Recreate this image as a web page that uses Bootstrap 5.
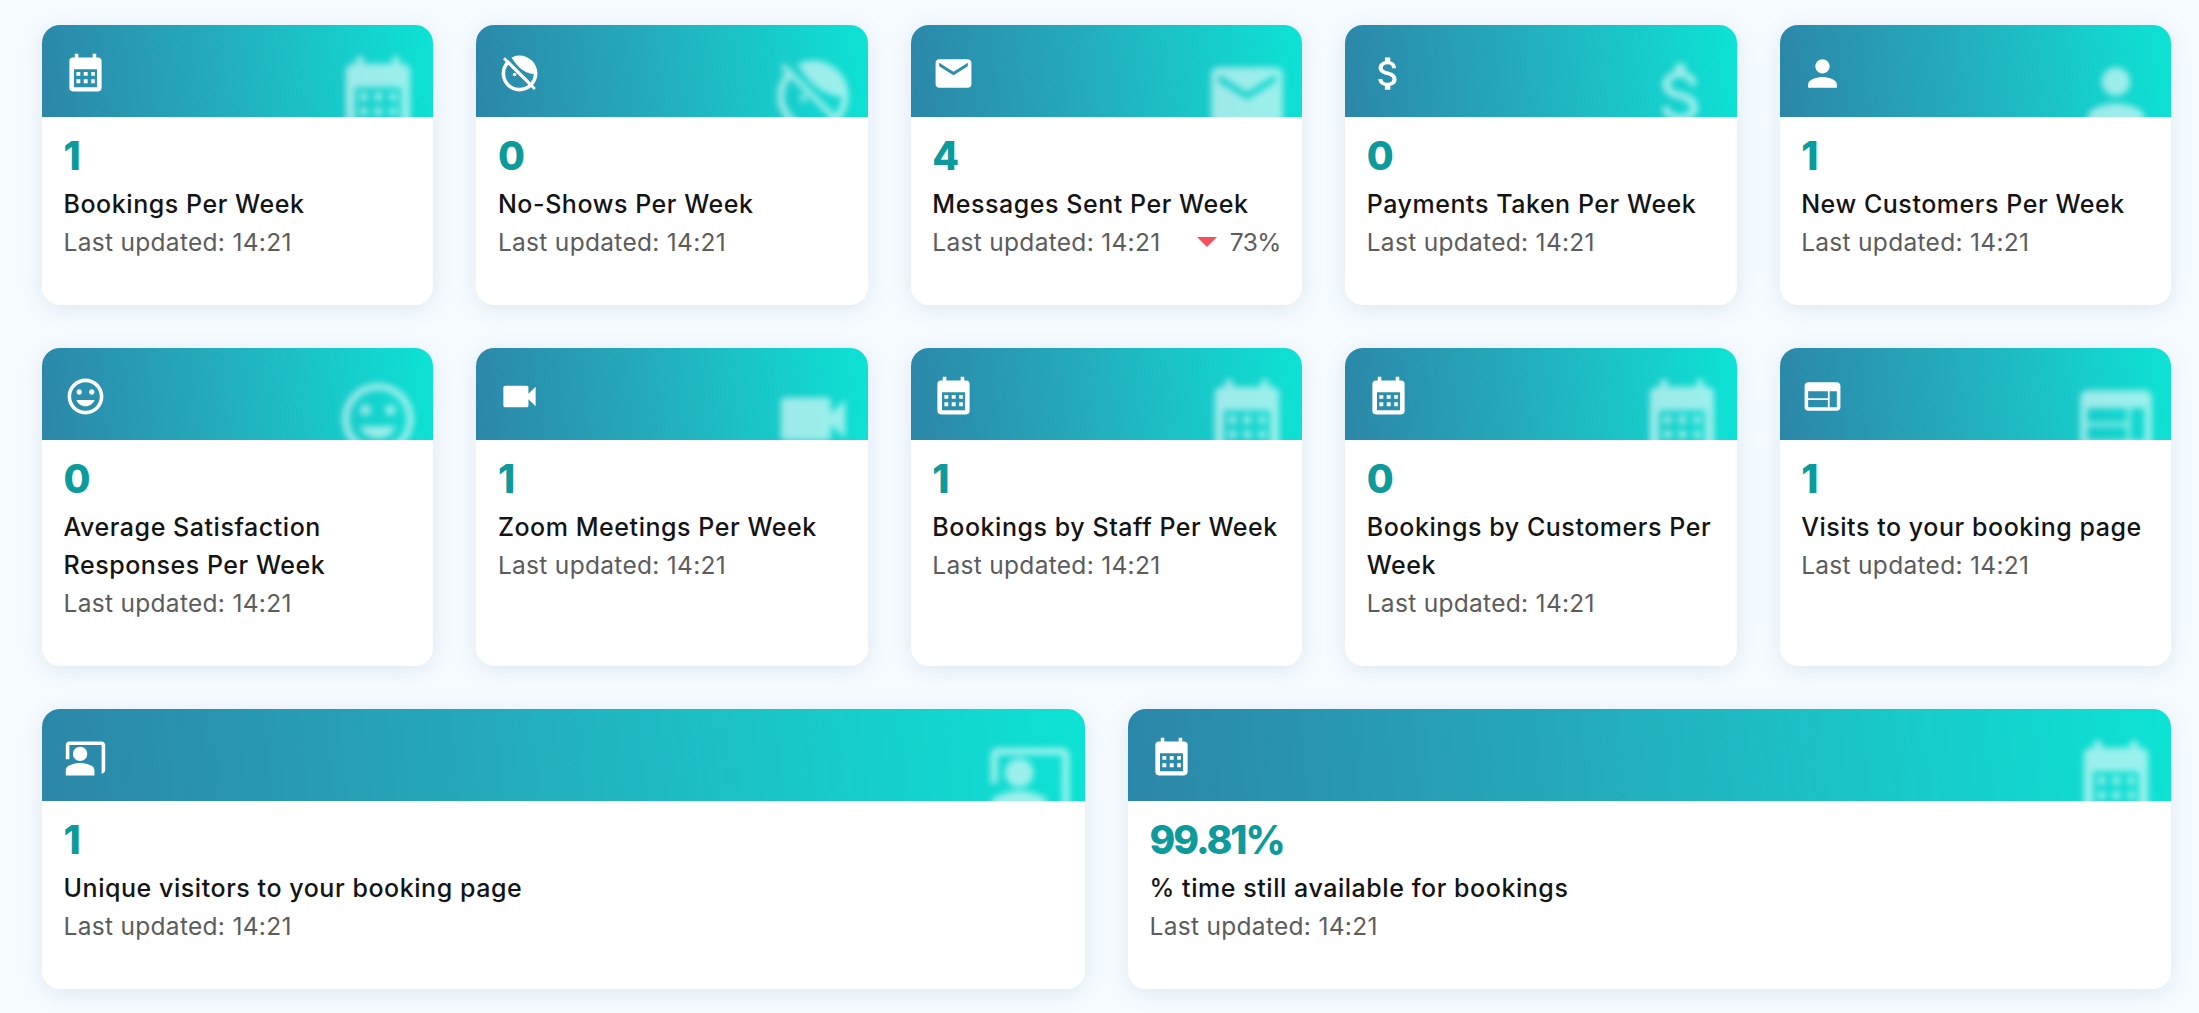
<!DOCTYPE html>
<html lang="en">
<head>
  <meta charset="UTF-8" />
  <title>Stats</title>
  <link href="https://cdn.jsdelivr.net/npm/bootstrap@5.3.3/dist/css/bootstrap.min.css" rel="stylesheet">
  <style>
    body { background:#f6fbff; font-family:Inter,"Liberation Sans",sans-serif; }
    .stats-page { padding:25px 28px 24px 42px; gap:43px }
    .stats-row { gap:43px }
    .stat-card { flex:1 1 0; min-width:0; border:0; border-radius:18px; background:#fff; box-shadow:0 4px 22px rgba(60,100,140,.12); overflow:hidden }
    .stat-head { position:relative; height:92px; padding:27px 0 0 21.5px; border:0; border-radius:0; overflow:hidden; background:linear-gradient(84deg,#2c86a8 0%,#24acbc 45%,#0de3d5 100%); color:#fff }
    .stat-icon { display:block; width:43px; height:43px; fill:currentColor }
    .stat-ghost { position:absolute; top:28px; right:12px; width:86px; height:86px; fill:#fff; opacity:.58; filter:blur(3px) }
    .stat-body { padding:14px 21.5px 44px }
    .stat-num { font-size:39px; line-height:50px; font-weight:800; color:#0d9a9a; margin-bottom:4px; letter-spacing:-2px }
    .stat-title { font-size:25px; line-height:38px; font-weight:500; color:#141414; letter-spacing:.55px }
    .stat-meta { font-size:24.5px; line-height:38px; color:#5c5c5c; letter-spacing:.3px }
    .trend-wrap { gap:13px; letter-spacing:-.6px }
    .trend-down { width:20px; height:10px; fill:#f4505f }
  </style>
</head>
<body>
<svg width="0" height="0" class="position-absolute">
  <symbol id="i-cal" viewBox="0 0 24 24"><path fill-rule="evenodd" d="M6 1h2v2h8V1h2v2h1a2 2 0 0 1 2 2v15a2 2 0 0 1-2 2H5a2 2 0 0 1-2-2V5a2 2 0 0 1 2-2h1zM5.600 9.600v10.100h12.800V9.600zM6.900 11.100h2.200v2.200H6.900zM11 11.100h2.200v2.200H11zM15.200 11.100h2v2.200h-2zM6.900 15.200h2.200v2.200H6.900zM11 15.200h2.200v2.200H11zM15.200 15.200h2v2.200h-2z"/></symbol>
  <symbol id="i-face" viewBox="0 0 24 24"><path fill-rule="evenodd" d="M12 2a10 10 0 1 0 0 20 10 10 0 0 0 0-20zM5.820 6.920A8 8 0 0 0 17.080 18.180zM5.500 4.400 18.180 17.080A8 8 0 0 0 20 12.300C16 12 12 9.500 9.600 6 8.800 5 8.200 4 7.600 3A10 10 0 0 0 5.500 4.400z"/><circle cx="9.300" cy="12.600" r="1"/><path d="M2.800 4 20 21.200l1.100-1.100L3.900 2.900z"/></symbol>
  <symbol id="i-mail" viewBox="0 0 24 24"><path d="M20 4H4c-1.100 0-2 .9-2 2v12c0 1.100.9 2 2 2h16c1.100 0 2-.9 2-2V6c0-1.100-.9-2-2-2zm0 4-8 5-8-5V6l8 5 8-5v2z"/></symbol>
  <symbol id="i-money" viewBox="0 0 24 24"><path d="M11.800 10.900c-2.270-.59-3-1.200-3-2.150 0-1.090 1.010-1.850 2.700-1.850 1.780 0 2.440.85 2.500 2.100h2.210c-.07-1.720-1.120-3.300-3.210-3.810V3h-3v2.160c-1.940.42-3.500 1.680-3.500 3.610 0 2.310 1.910 3.460 4.700 4.130 2.500.6 3 1.480 3 2.410 0 .69-.49 1.790-2.700 1.790-2.060 0-2.870-.92-2.980-2.100h-2.200c.12 2.190 1.760 3.420 3.680 3.830V21h3v-2.150c1.950-.37 3.500-1.500 3.500-3.550 0-2.840-2.430-3.810-4.700-4.400z"/></symbol>
  <symbol id="i-person" viewBox="0 0 24 24"><path d="M12 12c2.210 0 4-1.790 4-4s-1.790-4-4-4-4 1.790-4 4 1.790 4 4 4zm0 2c-2.670 0-8 1.340-8 4v2h16v-2c0-2.660-5.330-4-8-4z"/></symbol>
  <symbol id="i-mood" viewBox="0 0 24 24"><path d="M11.990 2C6.470 2 2 6.480 2 12s4.470 10 9.990 10C17.520 22 22 17.520 22 12S17.520 2 11.990 2zM12 20c-4.420 0-8-3.580-8-8s3.580-8 8-8 8 3.580 8 8-3.580 8-8 8zm3.500-9c.83 0 1.500-.67 1.500-1.500S16.330 8 15.500 8 14 8.670 14 9.500s.67 1.500 1.500 1.500zm-7 0c.83 0 1.500-.67 1.500-1.500S9.330 8 8.500 8 7 8.670 7 9.500 7.670 11 8.500 11zm3.500 6.500c2.330 0 4.310-1.460 5.110-3.500H6.890c.8 2.040 2.780 3.500 5.110 3.500z"/></symbol>
  <symbol id="i-video" viewBox="0 0 24 24"><path d="M17 10.500V7c0-.55-.45-1-1-1H4c-.55 0-1 .45-1 1v10c0 .55.45 1 1 1h12c.55 0 1-.45 1-1v-3.500l4 4v-11l-4 4z"/></symbol>
  <symbol id="i-web" viewBox="0 0 24 24"><path d="M20 4H4c-1.100 0-1.990.9-1.990 2L2 18c0 1.100.9 2 2 2h16c1.100 0 2-.9 2-2V6c0-1.100-.9-2-2-2zm-5 14H4v-4h11v4zm0-5H4V9h11v4zm5 5h-4V9h4v9z"/></symbol>
  <symbol id="i-present" viewBox="0 0 24 24"><path d="M21 3H3C1.900 3 1 3.900 1 5v8h2V5h18v16c1.100 0 2-.9 2-2V5c0-1.100-.9-2-2-2z"/><circle cx="9" cy="10" r="4"/><path d="M15.390 16.560C13.710 15.700 11.530 15 9 15c-2.530 0-4.710.7-6.390 1.560C1.610 17.070 1 18.100 1 19.220V22h16v-2.780c0-1.120-.61-2.150-1.610-2.660z"/></symbol>
</svg>

<div class="stats-page d-flex flex-column" id="page"></div>

<script src="https://cdn.jsdelivr.net/npm/bootstrap@5.3.3/dist/js/bootstrap.bundle.min.js"></script>
<script>
const rows=[
  [['i-cal','1','Bookings Per Week'],['i-face','0','No-Shows Per Week'],['i-mail','4','Messages Sent Per Week','73%'],['i-money','0','Payments Taken Per Week'],['i-person','1','New Customers Per Week']],
  [['i-mood','0','Average Satisfaction Responses Per Week'],['i-video','1','Zoom Meetings Per Week'],['i-cal','1','Bookings by Staff Per Week'],['i-cal','0','Bookings by Customers Per Week'],['i-web','1','Visits to your booking page']],
  [['i-present','1','Unique visitors to your booking page'],['i-cal','99.81%','% time still available for bookings']]
];
const use=(id,cls)=>`<svg class="${cls}"><use href="#${id}"/></svg>`;
document.getElementById('page').innerHTML=rows.map(r=>`<div class="stats-row d-flex">${r.map(([icon,num,title,trend])=>`
  <div class="card stat-card">
    <div class="card-header stat-head">${use(icon,'stat-icon')}${use(icon,'stat-ghost')}</div>
    <div class="card-body stat-body">
      <div class="stat-num">${num}</div>
      <div class="stat-title">${title}</div>
      <div class="stat-meta d-flex justify-content-between align-items-center"><span>Last updated: 14:21</span>${trend?`<span class="trend-wrap d-flex align-items-center"><svg class="trend-down" viewBox="0 0 20 10"><polygon points="0,0 20,0 10,10"/></svg>${trend}</span>`:''}</div>
    </div>
  </div>`).join('')}</div>`).join('');
</script>
</body>
</html>
